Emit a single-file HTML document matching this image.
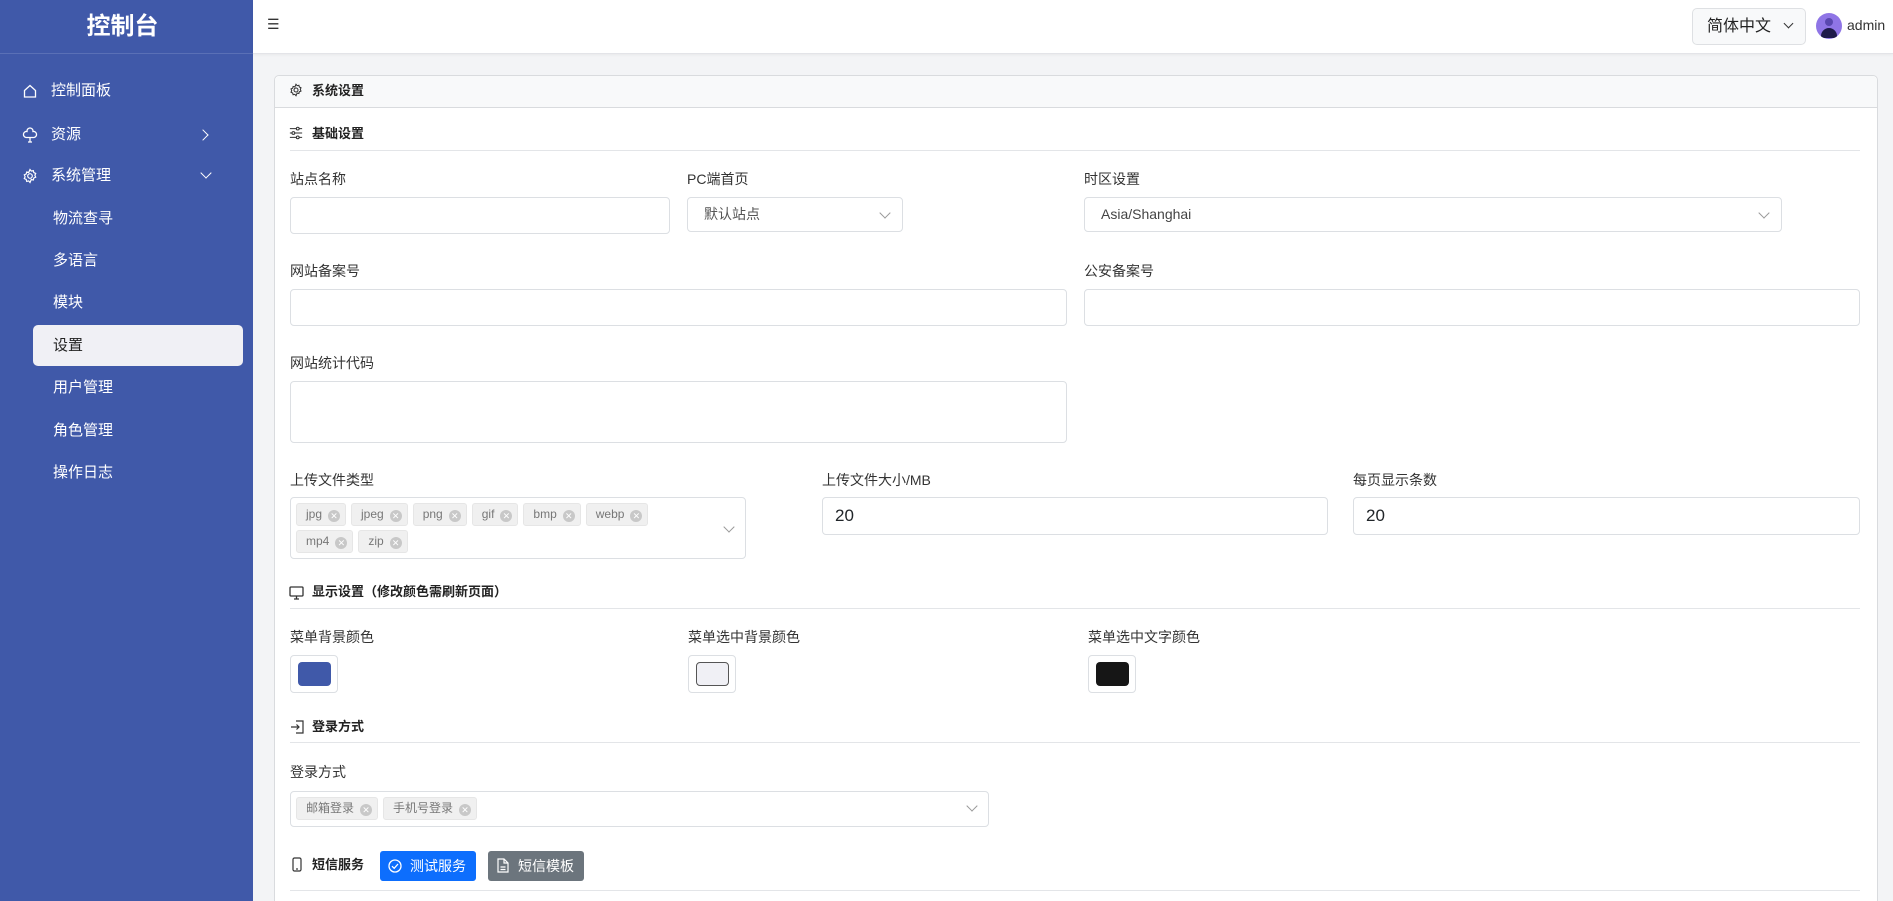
<!DOCTYPE html>
<html><head><meta charset="utf-8"><style>
*{box-sizing:border-box;margin:0;padding:0}
html,body{width:1893px;height:901px;overflow:hidden}
body{background:#f3f4f6;font-family:"Liberation Sans","Noto Sans CJK SC",sans-serif;color:#212529;position:relative}
.a{position:absolute}
#sb{left:0;top:0;width:253px;height:901px;background:#4059a9;color:#fff}
.mi{position:absolute;left:51px;font-size:15px;color:#fff;line-height:20px}
.sub{left:53px}
.ic{position:absolute;left:22px}
#hd{left:253px;top:0;width:1640px;height:54px;background:#fff;border-bottom:1px solid #e3e4e8;box-shadow:0 1px 3px rgba(0,0,0,.05)}
#card{left:274px;top:75px;width:1604px;height:840px;background:#fff;border:1px solid #d9dbde;border-radius:5px}
.lbl{position:absolute;font-size:14px;color:#333;line-height:18px}
.inp{position:absolute;background:#fff;border:1px solid #dcdfe3;border-radius:4px}
.sec{position:absolute;font-size:13px;font-weight:bold;line-height:18px;color:#222}
.ln{position:absolute;height:1px;background:#e3e5e8;left:290px;width:1570px}
.tag{display:inline-block;background:#f0f0f0;border:1px solid #e6e6e6;border-radius:3px;font-size:12px;color:#777;height:23px;line-height:21px;padding:0 5px 0 9px;margin:0 5px 4px 0}
.tag i{display:inline-block;width:12px;height:12px;border-radius:50%;background:#c8c8c8;color:#fff;font-style:normal;font-size:9px;line-height:12px;text-align:center;margin-left:6px;vertical-align:-1px}
.chev{position:absolute;width:8px;height:8px;border-right:1px solid #999;border-bottom:1px solid #999;transform:rotate(45deg)}
.sw{position:absolute;width:48px;height:38px;border:1px solid #dcdfe3;border-radius:4px;background:#fff}
.sw b{position:absolute;left:7px;top:6px;width:33px;height:24px;border-radius:4px}
.btn{position:absolute;height:30px;border-radius:3px;color:#fff;font-size:14px;line-height:30px;padding-left:30px}
</style></head><body>
<div id="sb" class="a">
<div class="a" style="left:-4px;top:12px;width:253px;text-align:center;font-size:24px;font-weight:bold;line-height:30px">控制台</div>
<div class="a" style="left:0;top:53px;width:253px;height:1px;background:#5a70b6"></div>
<svg class="ic" style="top:83px" width="16" height="16" viewBox="0 0 16 16" fill="none" stroke="#fff" stroke-width="1.3"><path d="M2.5 7.5 8 2.5l5.5 5V14h-11z"/></svg>
<div class="mi" style="top:81px">控制面板</div>
<svg class="ic" style="top:126px" width="16" height="18" viewBox="0 0 16 18" fill="none" stroke="#fff" stroke-width="1.3"><path d="M8 2a3 3 0 0 1 3 3.5 3 3 0 0 1 1 6H4a3 3 0 0 1 1-6A3 3 0 0 1 8 2zM8 11.5V16M6 16h4"/></svg>
<div class="mi" style="top:125px">资源</div>
<div class="chev" style="left:199px;top:131px;transform:rotate(-45deg);border-color:#fff"></div>
<svg class="ic" style="top:168px" width="16" height="16" viewBox="0 0 16 16" fill="none" stroke="#fff" stroke-width="1.2"><circle cx="8" cy="8" r="2.3"/><path d="M8 1.5l1.3 1.6 2-.5.5 2 1.9.8-.8 1.9.8 1.9-1.9.8-.5 2-2-.5L8 14.5l-1.3-1.6-2 .5-.5-2-1.9-.8.8-1.9-.8-1.9 1.9-.8.5-2 2 .5z"/></svg>
<div class="mi" style="top:166px">系统管理</div>
<div class="chev" style="left:202px;top:169px;border-color:#fff"></div>
<div class="mi sub" style="top:209px">物流查寻</div>
<div class="mi sub" style="top:251px">多语言</div>
<div class="mi sub" style="top:293px">模块</div>
<div class="a" style="left:33px;top:325px;width:210px;height:41px;background:#f0f0f5;border-radius:5px"></div>
<div class="mi sub" style="top:336px;color:#222">设置</div>
<div class="mi sub" style="top:378px">用户管理</div>
<div class="mi sub" style="top:421px">角色管理</div>
<div class="mi sub" style="top:463px">操作日志</div>
</div>
<div id="hd" class="a">
<div class="a" style="left:14px;top:16px;font-size:14px;color:#333">☰</div>
<div class="a" style="left:1439px;top:8px;width:114px;height:37px;border:1px solid #dee0e3;border-radius:5px;background:#f8f9fa;font-size:16px;line-height:35px;padding-left:14px;color:#222">简体中文</div>
<div class="chev" style="left:1532px;top:20px;border-color:#333;width:7px;height:7px"></div>
<div class="a" style="left:1563px;top:13px;width:26px;height:26px;border-radius:50%;background:#8f75e6;overflow:hidden"><div class="a" style="left:9px;top:5px;width:8px;height:8px;border-radius:50%;background:#5a48b0"></div><div class="a" style="left:5px;top:15px;width:16px;height:10px;border-radius:8px 8px 0 0;background:#1e1a4a"></div></div>
<div class="a" style="left:1594px;top:17px;font-size:14px;color:#333">admin</div>
</div>
<div id="card" class="a"><div class="a" style="left:0;top:0;width:1602px;height:32px;background:#f8f9fa;border-bottom:1px solid #d9dbde;border-radius:5px 5px 0 0"></div></div>
<svg class="a" style="left:289px;top:83px" width="14" height="14" viewBox="0 0 16 16" fill="none" stroke="#333" stroke-width="1.2"><circle cx="8" cy="8" r="2.3"/><path d="M8 1.5l1.3 1.6 2-.5.5 2 1.9.8-.8 1.9.8 1.9-1.9.8-.5 2-2-.5L8 14.5l-1.3-1.6-2 .5-.5-2-1.9-.8.8-1.9-.8-1.9 1.9-.8.5-2 2 .5z"/></svg>
<div class="sec" style="left:312px;top:82px">系统设置</div>
<svg class="a" style="left:289px;top:126px" width="14" height="14" viewBox="0 0 16 16" fill="none" stroke="#333" stroke-width="1.2"><path d="M1 3h14M1 8h14M1 13h14"/><circle cx="10" cy="3" r="1.6" fill="#fff"/><circle cx="5" cy="8" r="1.6" fill="#fff"/><circle cx="10" cy="13" r="1.6" fill="#fff"/></svg>
<div class="sec" style="left:312px;top:125px">基础设置</div>
<div class="ln" style="top:150px"></div>

<div class="lbl" style="left:290px;top:170px">站点名称</div>
<div class="inp" style="left:290px;top:197px;width:380px;height:37px"></div>
<div class="lbl" style="left:687px;top:170px">PC端首页</div>
<div class="inp" style="left:687px;top:197px;width:216px;height:35px;font-size:14px;color:#555;line-height:33px;padding-left:16px">默认站点</div>
<div class="chev" style="left:881px;top:209px"></div>
<div class="lbl" style="left:1084px;top:170px">时区设置</div>
<div class="inp" style="left:1084px;top:197px;width:698px;height:35px;font-size:14px;color:#444;line-height:33px;padding-left:16px">Asia/Shanghai</div>
<div class="chev" style="left:1760px;top:209px"></div>

<div class="lbl" style="left:290px;top:262px">网站备案号</div>
<div class="inp" style="left:290px;top:289px;width:777px;height:37px"></div>
<div class="lbl" style="left:1084px;top:262px">公安备案号</div>
<div class="inp" style="left:1084px;top:289px;width:776px;height:37px"></div>

<div class="lbl" style="left:290px;top:354px">网站统计代码</div>
<div class="inp" style="left:290px;top:381px;width:777px;height:62px"></div>

<div class="lbl" style="left:290px;top:471px">上传文件类型</div>
<div class="inp" style="left:290px;top:497px;width:456px;height:62px;padding:5px 0 0 5px;line-height:0"><span class="tag">jpg<i>✕</i></span><span class="tag">jpeg<i>✕</i></span><span class="tag">png<i>✕</i></span><span class="tag">gif<i>✕</i></span><span class="tag">bmp<i>✕</i></span><span class="tag">webp<i>✕</i></span><br><span class="tag">mp4<i>✕</i></span><span class="tag">zip<i>✕</i></span></div>
<div class="chev" style="left:725px;top:523px"></div>
<div class="lbl" style="left:822px;top:471px">上传文件大小/MB</div>
<div class="inp" style="left:822px;top:497px;width:506px;height:38px;font-size:17px;line-height:36px;padding-left:12px">20</div>
<div class="lbl" style="left:1353px;top:471px">每页显示条数</div>
<div class="inp" style="left:1353px;top:497px;width:507px;height:38px;font-size:17px;line-height:36px;padding-left:12px">20</div>

<svg class="a" style="left:289px;top:586px" width="15" height="14" viewBox="0 0 15 14" fill="none" stroke="#333" stroke-width="1.3"><rect x="1" y="1" width="13" height="9" rx="1"/><path d="M5 13h5M7.5 10v3"/></svg>
<div class="sec" style="left:312px;top:583px">显示设置（修改颜色需刷新页面）</div>
<div class="ln" style="top:608px"></div>

<div class="lbl" style="left:290px;top:628px">菜单背景颜色</div>
<div class="sw" style="left:290px;top:655px"><b style="background:#4059a9"></b></div>
<div class="lbl" style="left:688px;top:628px">菜单选中背景颜色</div>
<div class="sw" style="left:688px;top:655px"><b style="background:#f0f0f5;border:1px solid #555"></b></div>
<div class="lbl" style="left:1088px;top:628px">菜单选中文字颜色</div>
<div class="sw" style="left:1088px;top:655px"><b style="background:#161616"></b></div>

<svg class="a" style="left:290px;top:720px" width="14" height="14" viewBox="0 0 14 14" fill="none" stroke="#333" stroke-width="1.2"><path d="M6 1h7v12H6M1 7h8M6.5 4.5 9 7l-2.5 2.5"/></svg>
<div class="sec" style="left:312px;top:718px">登录方式</div>
<div class="ln" style="top:742px"></div>
<div class="lbl" style="left:290px;top:763px">登录方式</div>
<div class="inp" style="left:290px;top:791px;width:699px;height:36px;padding:5px 0 0 5px;line-height:0"><span class="tag">邮箱登录<i>✕</i></span><span class="tag">手机号登录<i>✕</i></span></div>
<div class="chev" style="left:968px;top:802px"></div>

<svg class="a" style="left:292px;top:857px" width="10" height="15" viewBox="0 0 10 15" fill="none" stroke="#333" stroke-width="1.2"><rect x="1" y="1" width="8" height="13" rx="1.5"/><path d="M4 12h2"/></svg>
<div class="sec" style="left:312px;top:856px">短信服务</div>
<div class="btn" style="left:380px;top:851px;width:96px;background:#0d6efd">测试服务</div>
<svg class="a" style="left:388px;top:859px" width="14" height="14" viewBox="0 0 14 14" fill="none" stroke="#fff" stroke-width="1.3"><circle cx="7" cy="7" r="6"/><path d="M4 7.2 6.2 9.3 10 5"/></svg>
<div class="btn" style="left:488px;top:851px;width:96px;background:#6c757d">短信模板</div>
<svg class="a" style="left:497px;top:858px" width="12" height="15" viewBox="0 0 12 15" fill="none" stroke="#fff" stroke-width="1.2"><path d="M1 1h6l4 4v9H1zM7 1v4h4M3.5 9h5M3.5 11.5h5"/></svg>
<div class="ln" style="top:890px"></div>
</body></html>
